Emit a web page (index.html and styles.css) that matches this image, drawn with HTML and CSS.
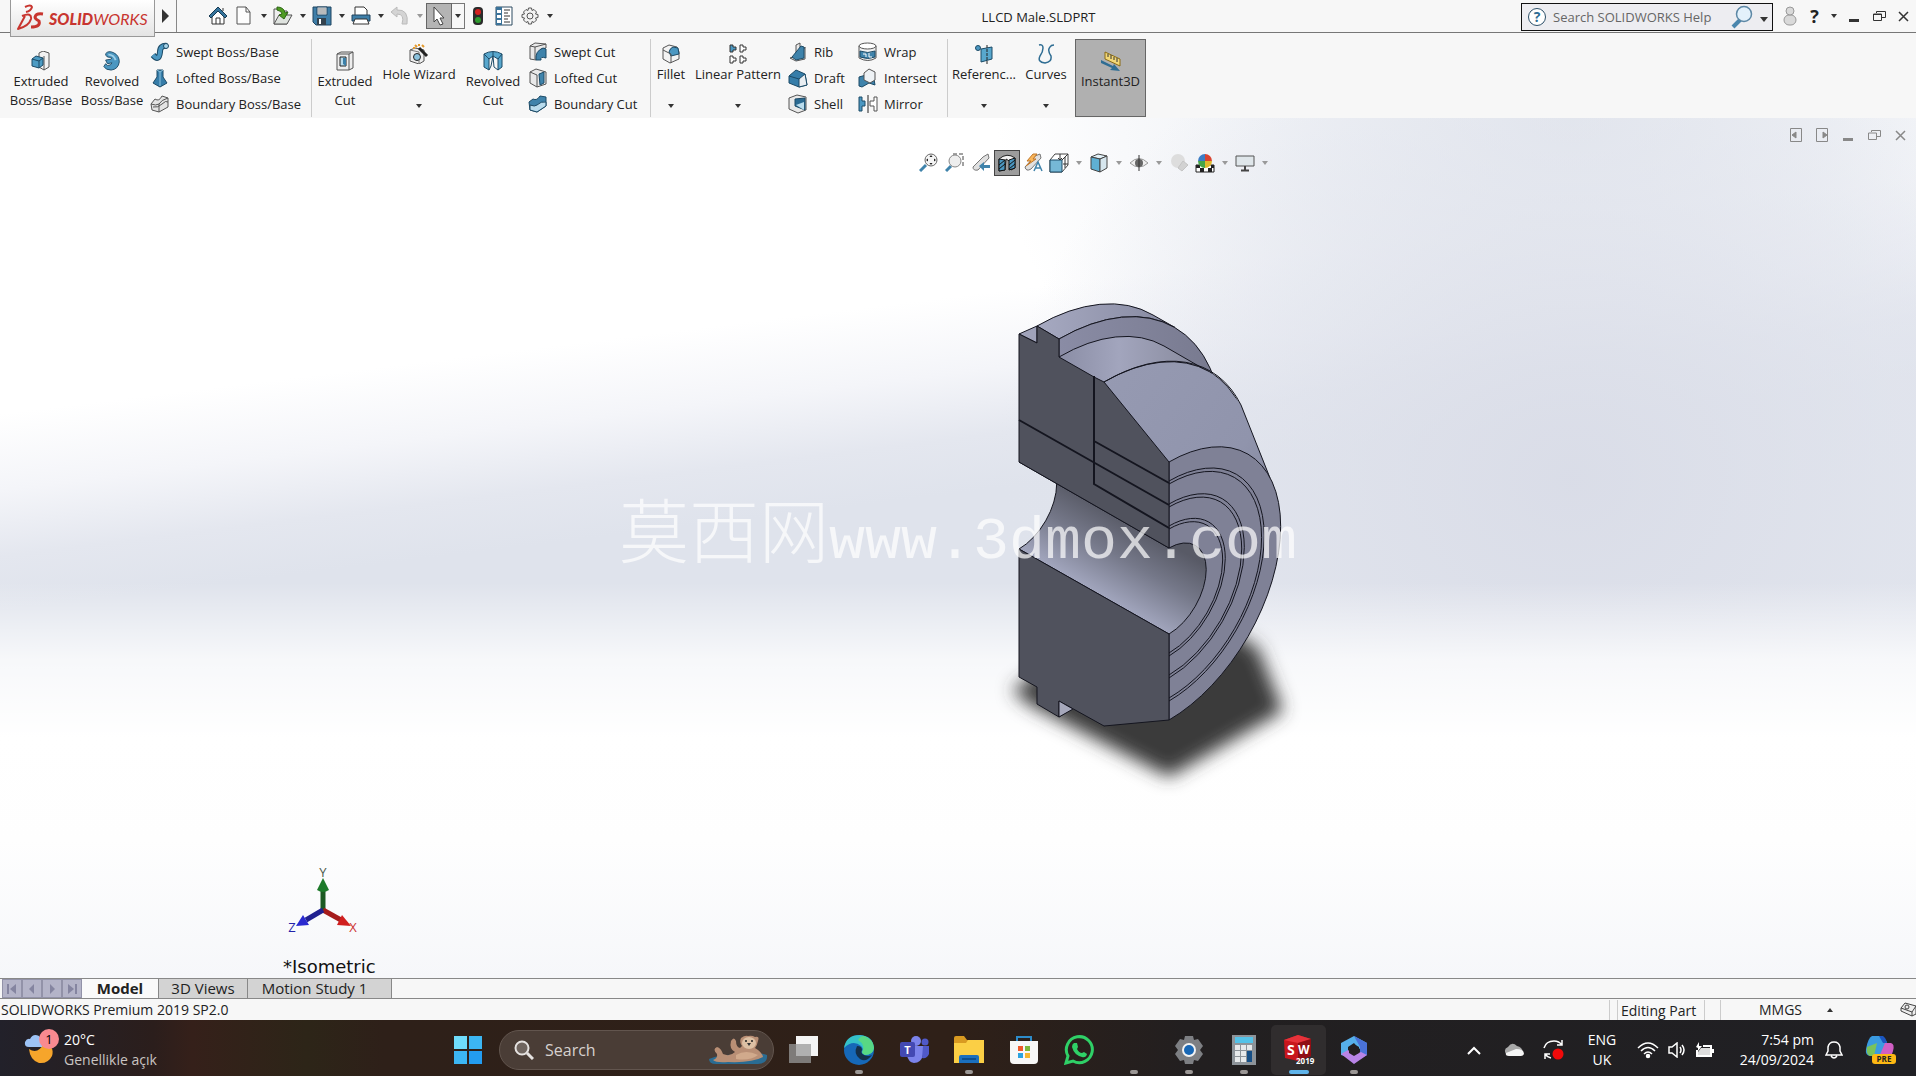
FILE: index.html
```html
<!DOCTYPE html>
<html lang="en">
<head>
    <meta charset="UTF-8">
    <meta name="viewport" content="width=device-width, initial-scale=1.0">
    <title>LLCD Male.SLDPRT</title>
    <link rel="stylesheet" href="styles.css">
</head>
<body>
    <header class="titlebar">
        <div class="logo">
            <svg width="28" height="28" viewBox="0 0 28 28" fill="none" stroke="#c8352f" stroke-width="2" stroke-linejoin="round"><path d="M8 3Q14 0 15 3Q14 7 9 8"/><path d="M5 12Q15 8 14 15Q12 22 1 25L8 12" /><path d="M26 10Q19 9 18 13Q18 15 22 17Q24 23 14 23" stroke-width="3"/></svg>
            <span class="logo-text"><b>SOLID</b>WORKS</span>
        </div>
        <button class="logo-more" aria-label="Menu"><svg width="8" height="14"><path d="M0 0L7 7L0 14Z" fill="#333"/></svg></button>
        <div class="quick">
            <button class="q home" aria-label="Home"><svg width="20" height="20" viewBox="0 0 20 20"><path d="M4 9V18H16V9L10 3Z" fill="#fff" stroke="#333"/><path d="M1 10L10 1L19 10L17 12L10 5L3 12Z" fill="#35749c" stroke="#173a52"/><path d="M8 18V12H12V18M15 2V5" fill="none" stroke="#333"/></svg></button>
            <button class="q" aria-label="New"><svg width="18" height="20" viewBox="0 0 18 20"><path d="M2 1H11L15 6V18H2Z" fill="#fdfdfd" stroke="#555"/><path d="M11 1V6H15" fill="none" stroke="#555"/></svg></button>
            <button class="arrow" aria-label="New options"></button>
            <button class="q" aria-label="Open"><svg width="22" height="20" viewBox="0 0 22 20"><path d="M2 18V3H7L9 5H15V18Z" fill="#eee" stroke="#555"/><path d="M2 18L7 9H20L15 18Z" fill="#dfe3df" stroke="#555"/><path d="M5 1Q12 1 13 7L16 6L12 13L7 9L10 8Q10 5 5 4Z" fill="#4f9c23" stroke="#2c6612"/></svg></button>
            <button class="arrow" aria-label="Open options"></button>
            <button class="q" aria-label="Save"><svg width="20" height="20" viewBox="0 0 20 20"><path d="M1 1H19V19H4L1 16Z" fill="#3e7ea8" stroke="#1f4561"/><path d="M5 1H15V9H5Z" fill="#e8edf0" stroke="#1f4561"/><path d="M6 3H14M6 5H14M6 7H14" stroke="#888"/><path d="M5 12H14V19H5Z" fill="#33424e"/><path d="M7 13H9V18H7Z" fill="#fff"/></svg></button>
            <button class="arrow" aria-label="Save options"></button>
            <button class="q" aria-label="Print"><svg width="20" height="20" viewBox="0 0 20 20"><path d="M4 1H13L16 4V10H4Z" fill="#fff" stroke="#333"/><path d="M1 9H19V15H1Z" fill="#3f7fa8" stroke="#20435c"/><path d="M4 13H16L18 18H2Z" fill="#fff" stroke="#333"/></svg></button>
            <button class="arrow" aria-label="Print options"></button>
            <button class="q" aria-label="Undo"><svg width="20" height="20" viewBox="0 0 20 20"><path d="M1 6L7 1V4Q19 3 17 18L12 18Q15 8 7 8V11Z" fill="#d4d4d4" stroke="#bbb"/></svg></button>
            <button class="arrow pale" aria-label="Undo options"></button>
            <button class="q select" aria-label="Select"><svg width="14" height="20" viewBox="0 0 14 20"><path d="M2 1V16L5 13L8 19L11 18L8 12H12Z" fill="#fff" stroke="#444"/></svg></button>
            <button class="arrow select-arrow" aria-label="Select options"></button>
            <button class="q" aria-label="Rebuild"><svg width="12" height="20" viewBox="0 0 12 20"><rect x="1" y="1" width="10" height="18" rx="4" fill="#2b2b2b"/><circle cx="6" cy="6" r="3" fill="#d42020"/><circle cx="6" cy="14" r="3" fill="#2f9b2f"/></svg></button>
            <button class="q" aria-label="File properties"><svg width="18" height="20" viewBox="0 0 18 20"><path d="M1 1H17V19H1Z" fill="#fff" stroke="#2c4b60"/><path d="M1 1H7V19H1Z" fill="#3a7299"/><path d="M2 4H6V7H2ZM2 9H6V12H2ZM2 14H6V17H2Z" fill="#fff"/><path d="M9 4H15M9 7H13M9 10H15M9 13H13M9 16H15" stroke="#333"/></svg></button>
            <button class="q" aria-label="Options"><svg width="18" height="18" viewBox="0 0 18 18" fill="none" stroke="#555"><path d="M7.500 1H10.500L11 3.500L13 2.500L15.500 5L14.500 7L17 7.500V10.500L14.500 11L15.500 13L13 15.500L11 14.500L10.500 17H7.500L7 14.500L5 15.500L2.500 13L3.500 11L1 10.500V7.500L3.500 7L2.500 5L5 2.500L7 3.500Z" fill="#f2f2f2"/><circle cx="9" cy="9" r="3"/></svg></button>
            <button class="arrow" aria-label="More options"></button>
        </div>
        <div class="doc-title">LLCD Male.SLDPRT</div>
        <label class="help-search">
            <svg width="20" height="20" viewBox="0 0 20 20"><circle cx="10" cy="10" r="8.500" fill="#fff" stroke="#2b4f68"/><text x="10" y="15" text-anchor="middle" class="qmark">?</text></svg>
            <input type="text" placeholder="Search SOLIDWORKS Help" aria-label="Search SOLIDWORKS Help">
            <svg width="24" height="24" viewBox="0 0 24 24"><path d="M11 14L3 22" stroke="#4a86ad" stroke-width="4"/><circle cx="14" cy="9" r="7.500" fill="#e3f1fb" stroke="#5c87a5" stroke-width="1.500"/></svg>
            <i class="caret big"></i>
        </label>
        <div class="win">
            <button aria-label="User"><svg width="14" height="20" viewBox="0 0 14 20" fill="#d9d9d9" stroke="#999"><rect x="1" y="9" width="12" height="10" rx="5"/><circle cx="7" cy="5" r="4"/></svg></button>
            <button class="help">?</button>
            <button class="arrow" aria-label="Help options"></button>
            <button aria-label="Minimize"><svg width="12" height="14"><path d="M1 11.500H11" stroke="#333" stroke-width="3"/></svg></button>
            <button aria-label="Restore"><svg width="14" height="12" fill="none" stroke="#333"><path d="M4.500 3V1.500H13.500V7.500H10"/><path d="M1.500 4H9.500V10.500H1.500ZM1 4.500H10"/></svg></button>
            <button aria-label="Close"><svg width="11" height="11"><path d="M1 1L10 10M10 1L1 10" stroke="#333" stroke-width="1.500"/></svg></button>
        </div>
    </header>

    <nav class="ribbon">
        <div class="group g1">
            <button class="big mid w70"><svg width="20" height="20" viewBox="0 0 20 20"><path d="M8 2L12 0L18 2V16L13 19L8 16Z" fill="#f2f2f2" stroke="#555"/><path d="M13 5V19" stroke="#555"/><path d="M1 8L5 5L12 7V14L8 17L1 15Z" fill="#4d9cc4" stroke="#1c4a66"/><path d="M1 8L8 10V17M8 10L12 7" fill="none" stroke="#1c4a66"/></svg>Extruded<br>Boss/Base</button>
            <button class="big mid w72"><svg width="20" height="22" viewBox="0 0 20 22"><path d="M3 3Q6 -1 12 2Q18 5 18 12Q17 20 9 21Q3 21 1 17L3 14L5 16Q9 16 10 13L5 14L3 10L9 9Q11 7 8 7Q3 7 3 3Z" fill="#4b97c1" stroke="#1c4a66"/><path d="M6 4Q12 4 14 10" fill="none" stroke="#9fd0e8" stroke-width="2"/></svg>Revolved<br>Boss/Base</button>
            <div class="stack">
                <button class="small"><svg width="20" height="20" viewBox="0 0 20 20"><path d="M3 13Q9 20 10 10Q10 3 17 4" fill="none" stroke="#1c4a66" stroke-width="6"/><path d="M3 13Q9 20 10 10Q10 3 17 4" fill="none" stroke="#4b97c1" stroke-width="4"/><circle cx="16" cy="4" r="2.500" fill="#a9d5ea" stroke="#1c4a66"/></svg>Swept Boss/Base</button>
                <button class="small"><svg width="20" height="20" viewBox="0 0 20 20"><path d="M7 2H13L13 9L17 15L10 19L3 15L7 9Z" fill="#367da9" stroke="#1c4a66"/><path d="M7 2L10 4L13 2M10 4V18" stroke="#8ec3dd" fill="none"/></svg>Lofted Boss/Base</button>
                <button class="small"><svg width="20" height="20" viewBox="0 0 20 20"><path d="M1 10L5 5Q9 8 12 2L18 4V13L9 18L2 16Z" fill="#e4e4e4" stroke="#555"/><path d="M1 10Q6 12 9 10Q11 6 18 4M9 10V18M3 13Q8 14 12 10T18 8" fill="none" stroke="#555"/></svg>Boundary Boss/Base</button>
            </div>
        </div>
        <div class="group g2">
            <button class="big mid w66"><svg width="18" height="20" viewBox="0 0 18 20"><path d="M1 3L5 1H17V17L13 19H1Z" fill="#eee" stroke="#555"/><path d="M1 3H13V19M13 3L17 1" fill="none" stroke="#555"/><path d="M4 6H10V15H4Z" fill="#b9dced" stroke="#222"/><path d="M7 7H10V15L7 13Z" fill="#3b7fa8"/></svg>Extruded<br>Cut</button>
            <button class="big w82"><svg width="20" height="20" viewBox="0 0 20 20"><path d="M1 6L6 4L15 6V17L10 20L1 17Z" fill="#eee" stroke="#555"/><path d="M1 6L10 8V20" fill="none" stroke="#777"/><circle cx="8" cy="13" r="3.500" fill="#8cc3de" stroke="#222"/><path d="M10 4L18 12" stroke="#222" stroke-width="3"/><path d="M6 1L8 3M10 0V2M4 4H6M13 1L15 3" stroke="#e49a2d" stroke-width="2"/></svg>Hole Wizard<i class="caret"></i></button>
            <button class="big mid w66"><svg width="20" height="20" viewBox="0 0 20 20"><path d="M1 3Q10 -2 19 3V16L15 19V8L10 5L6 8V19L1 16Z" fill="#58a7cd" stroke="#1c4a66"/><path d="M1 3Q5 7 6 8M19 3L15 8M10 1V5L11 16L15 19M10 5L8 15L6 19" fill="none" stroke="#1c4a66"/></svg>Revolved<br>Cut</button>
            <div class="stack">
                <button class="small"><svg width="20" height="20" viewBox="0 0 20 20"><path d="M2 4L7 1L18 2V6L13 7Q9 11 8 18L2 17Z" fill="#e9e9e9" stroke="#555"/><path d="M2 4L7 5V17M7 5L18 2" fill="none" stroke="#555"/><path d="M8 18Q7 9 15 6L18 7V16Q12 14 13 18Z" fill="#3f83ab" stroke="#1c4a66"/></svg>Swept Cut</button>
                <button class="small"><svg width="20" height="20" viewBox="0 0 20 20"><path d="M2 4L8 1L18 4V16L9 19L2 15Z" fill="#e9e9e9" stroke="#555"/><path d="M2 4L9 7V19" fill="none" stroke="#555"/><path d="M11 6L16 4V15L12 17Z" fill="#3f83ab" stroke="#1c4a66"/></svg>Lofted Cut</button>
                <button class="small"><svg width="20" height="20" viewBox="0 0 20 20"><path d="M1 8L5 5Q9 7 12 2L18 3V12L9 18L2 16Z" fill="#3f83ab" stroke="#1c4a66"/><path d="M2 11Q7 13 9 11Q13 7 18 8V12L9 18L2 16Z" fill="#b9dced" stroke="#1c4a66"/></svg>Boundary Cut</button>
            </div>
        </div>
        <div class="group g3">
            <button class="big w40"><svg width="20" height="20" viewBox="0 0 20 20"><path d="M2 4L8 1L16 3L18 8V15L9 19L2 15Z" fill="#f3f3f3" stroke="#555"/><path d="M8 8Q9 4 12 3L17 4L18 10L10 12Z" fill="#4b97c1" stroke="#1c4a66"/><path d="M2 6L10 10V19" fill="none" stroke="#555"/></svg>Fillet<i class="caret"></i></button>
            <button class="big w94"><svg width="18" height="20" viewBox="0 0 18 20" fill="#fff" stroke="#333"><path d="M1 1H4V3H7V6H4V8H1Z" fill="#4b97c1"/><path d="M11 1H14V3H17V6H14V8H11ZM1 12H4V14H7V17H4V19H1ZM11 12H14V14H17V17H14V19H11Z"/></svg>Linear Pattern<i class="caret"></i></button>
            <div class="stack w70">
                <button class="small"><svg width="20" height="20" viewBox="0 0 20 20"><path d="M2 16L8 14V3L12 1V14L17 5V17L8 19Z" fill="#e9e9e9" stroke="#555"/><path d="M4 15L13 4L16 5V16L8 18Z" fill="#3f83ab" stroke="#1c4a66"/></svg>Rib</button>
                <button class="small"><svg width="20" height="20" viewBox="0 0 20 20"><path d="M1 8L8 2L17 6L19 17L11 19L1 15Z" fill="#367da9" stroke="#1c4a66"/><path d="M11 11L17 6L19 17L11 19Z" fill="#e9eef2" stroke="#1c4a66"/><path d="M1 8L11 11" stroke="#1c4a66"/></svg>Draft</button>
                <button class="small"><svg width="20" height="20" viewBox="0 0 20 20"><path d="M1 4L9 1L18 3V16L10 19L1 15Z" fill="#e9e9e9" stroke="#555"/><path d="M7 5L17 4V16L7 12Z" fill="#2a6a92" stroke="#1c4a66"/><path d="M8 11L16 16V8Z" fill="#b9dced"/></svg>Shell</button>
            </div>
            <div class="stack">
                <button class="small"><svg width="20" height="20" viewBox="0 0 20 20"><path d="M1 4V16Q10 21 18 16V4" fill="#f1f1f1" stroke="#555"/><ellipse cx="9.500" cy="4" rx="8.500" ry="3" fill="#fff" stroke="#555"/><path d="M2 9Q10 12 17 9V15Q10 18 2 15Z" fill="#3f83ab" stroke="#1c4a66"/><path d="M5 12H8V15M11 11V15H14" stroke="#fff" fill="none"/></svg>Wrap</button>
                <button class="small"><svg width="20" height="20" viewBox="0 0 20 20"><path d="M1 9L8 7L16 11L17 17L11 15L4 19L1 18Z" fill="#3f83ab" stroke="#1c4a66"/><path d="M6 5L11 1L17 4V12L12 15L6 12Z" fill="#eef2f5" stroke="#555"/></svg>Intersect</button>
                <button class="small"><svg width="20" height="20" viewBox="0 0 20 20"><path d="M1 3H4V7H7V12H4V17H1Z" fill="#4b97c1" stroke="#1c4a66"/><path d="M10 1V19" stroke="#222"/><path d="M19 3H16V7H12V12H16V17H19Z" fill="#fff" stroke="#555"/></svg>Mirror</button>
            </div>
        </div>
        <div class="group g4">
            <button class="big w72"><svg width="20" height="20" viewBox="0 0 20 20"><circle cx="4" cy="4" r="2.500" fill="#4b97c1" stroke="#1c4a66"/><path d="M7 5L18 3V15L7 18Z" fill="#58a7cd" stroke="#1c4a66"/><path d="M13 1V20" stroke="#222" stroke-dasharray="3 1"/></svg>Referenc...<i class="caret"></i></button>
            <button class="big w52"><svg width="18" height="20" viewBox="0 0 18 20"><path d="M2 1Q6 0 6 4Q6 8 3 12Q0 18 8 19Q15 18 14 12Q10 6 13 3Q14 1 17 1" fill="none" stroke="#2f6d93" stroke-width="1.500"/></svg>Curves<i class="caret"></i></button>
        </div>
        <button class="instant"><svg width="22" height="20" viewBox="0 0 22 20"><path d="M5 1L20 8V15L5 8Z" fill="#f3d877" stroke="#8a6b14"/><path d="M8 3V6M11 4V8M14 6V9M17 7V11" stroke="#333"/><path d="M1 9L13 15L14 13L20 20L10 19L12 17L1 12Z" fill="#2f6d93"/></svg>Instant3D</button>
    </nav>

    <main class="viewport">
        <div class="headsup">
            <button aria-label="Zoom to fit"><svg width="20" height="20" viewBox="0 0 20 20"><path d="M7 12L1 18" stroke="#3f83ab" stroke-width="3"/><circle cx="12" cy="7" r="6" fill="#f5f5f5" stroke="#666"/><path d="M12 2L13.500 4H10.500ZM12 12L13.500 10H10.500ZM7 7L9 5.500V8.500ZM17 7L15 5.500V8.500Z" fill="#222"/></svg></button>
            <button aria-label="Zoom to area"><svg width="20" height="20" viewBox="0 0 20 20"><path d="M8 1H18V13" fill="none" stroke="#444" stroke-dasharray="4 2"/><path d="M6 13L1 18" stroke="#3f83ab" stroke-width="3"/><circle cx="10" cy="8" r="6" fill="#eee" stroke="#888"/></svg></button>
            <button aria-label="Previous view"><svg width="20" height="20" viewBox="0 0 20 20"><path d="M2 14L12 4L17 1L18 5L7 17Q2 18 2 14Z" fill="#e0e0e0" stroke="#777"/><path d="M8 13L13 9V12H19V15H13V18Z" fill="#3f83ab"/></svg></button>
            <button class="on" aria-label="Section view"><svg width="20" height="20" viewBox="0 0 20 20"><path d="M2 6Q10 -1 18 5V15L14 17V9L9 6L8 17L2 18Z" fill="#f2f2f2" stroke="#222"/><path d="M2 6L8 7V17L2 18ZM12 7L18 5V15L12 17Z" fill="#4b97c1" stroke="#111"/><path d="M2 12L8 7M2 16L8 11M12 12L18 7M12 16L18 11" stroke="#111"/></svg></button>
            <button aria-label="Dynamic annotation views"><svg width="20" height="20" viewBox="0 0 20 20"><path d="M2 14L12 3L17 1L18 5L8 16Q3 19 2 14Z" fill="#e0e0e0" stroke="#777"/><path d="M10 1L4 8H8L3 13L13 6H10L14 1Z" fill="#f9b65a" stroke="#c0772a"/><path d="M11 18L15 9L19 18M12 15H18" fill="none" stroke="#3f83ab" stroke-width="1.500"/></svg></button>
            <button aria-label="View orientation"><svg width="20" height="20" viewBox="0 0 20 20"><path d="M1 7L6 1H19V12L13 19H1Z" fill="#fff" stroke="#444"/><path d="M1 7H13V19H1Z" fill="#76b8d6" stroke="#1c4a66"/><path d="M13 7L19 1M11 1V7M9 5L11 7L13 5M16 4V15M14 11H19" fill="none" stroke="#333"/></svg></button>
            <button class="arrow pale" aria-label="Orientation options"></button>
            <button aria-label="Display style"><svg width="20" height="20" viewBox="0 0 20 20"><path d="M2 4L9 1L18 3L11 6Z" fill="#e3f2f9" stroke="#444"/><path d="M2 4L11 6V19L2 16Z" fill="#5fb0d3" stroke="#444"/><path d="M11 6L18 3V15L11 19Z" fill="#d6e6ee" stroke="#444"/></svg></button>
            <button class="arrow pale" aria-label="Display options"></button>
            <button aria-label="Hide or show items"><svg width="20" height="20" viewBox="0 0 20 20"><path d="M1 10Q10 1 19 10Q10 18 1 10Z" fill="#eee" stroke="#999"/><circle cx="10" cy="10" r="4" fill="#666"/><path d="M10 2V18" stroke="#333"/></svg></button>
            <button class="arrow pale" aria-label="Hide options"></button>
            <button aria-label="Edit appearance"><svg width="20" height="20" viewBox="0 0 20 20"><circle cx="9" cy="8" r="7" fill="#ddd"/><path d="M9 15L14 8L19 12L13 18Z" fill="#d2d2d2" stroke="#c4c4c4"/></svg></button>
            <button aria-label="Apply scene"><svg width="20" height="20" viewBox="0 0 20 20"><path d="M1 12H19V19H1Z" fill="#fff" stroke="#222"/><path d="M1 12H5V15H1ZM5 15H9V19H5ZM13 15H17V19H13ZM16 12H19V15H16Z" fill="#222"/><path d="M10 8V1A7 7 0 0 1 17 8Z" fill="#d8432f"/><path d="M10 8H17A7 7 0 0 1 10 15Z" fill="#e0b72d"/><path d="M10 8V15A7 7 0 0 1 3 8Z" fill="#46a548"/><path d="M10 8H3A7 7 0 0 1 10 1Z" fill="#3b7cc4"/></svg></button>
            <button class="arrow pale" aria-label="Scene options"></button>
            <button aria-label="View settings"><svg width="20" height="20" viewBox="0 0 20 20"><path d="M1 3H19V13H1Z" fill="#dfe6ea" stroke="#555"/><path d="M10 13V17M6 17.500H14" stroke="#444" stroke-width="2"/></svg></button>
            <button class="arrow pale" aria-label="View options"></button>
        </div>

        <div class="doc-controls">
            <button aria-label="Collapse left"><svg width="14" height="16" fill="none" stroke="#888"><path d="M1.500 1.500H12.500V14.500H1.500Z"/><path d="M7 5L3 8L7 11Z" fill="#888"/></svg></button>
            <button aria-label="Collapse right"><svg width="14" height="16" fill="none" stroke="#888"><path d="M1.500 1.500H12.500V14.500H1.500Z"/><path d="M8 5L12 8L8 11Z" fill="#888"/></svg></button>
            <button aria-label="Minimize document"><svg width="12" height="14"><path d="M1 11.500H11" stroke="#888" stroke-width="3"/></svg></button>
            <button aria-label="Restore document"><svg width="14" height="12" fill="none" stroke="#888"><path d="M4.500 3V1.500H13.500V7.500H10"/><path d="M1.500 4H9.500V10.500H1.500Z"/></svg></button>
            <button aria-label="Close document"><svg width="11" height="11"><path d="M1 1L10 10M10 1L1 10" stroke="#888" stroke-width="1.500"/></svg></button>
        </div>

        <svg class="part" width="352" height="520" viewBox="958 280 352 520">
            <defs>
                <filter id="soft" x="-20%" y="-20%" width="140%" height="140%"><feGaussianBlur stdDeviation="9"/></filter>
                <linearGradient id="rim" x1="0" y1="0" x2="1" y2="0"><stop offset="0" stop-color="#a6a9c1"/><stop offset="1" stop-color="#8689a0"/></linearGradient>
                <linearGradient id="face" x1="0" y1="0" x2="1" y2="0"><stop offset="0" stop-color="#8a8ca5"/><stop offset="1" stop-color="#77798e"/></linearGradient>
                <linearGradient id="neck" x1="0" y1="0" x2="1" y2="0"><stop offset="0" stop-color="#8a8da5"/><stop offset=".4" stop-color="#a2a5bd"/><stop offset="1" stop-color="#858799"/></linearGradient>
                <linearGradient id="cone" x1="0" y1="0" x2="1" y2="1"><stop offset="0" stop-color="#969ab2"/><stop offset=".6" stop-color="#9094ac"/><stop offset="1" stop-color="#7b7e93"/></linearGradient>
                <linearGradient id="bore" gradientUnits="userSpaceOnUse" x1="1120" y1="505" x2="1075" y2="583"><stop offset=".1" stop-color="#585a66"/><stop offset=".5" stop-color="#757889"/><stop offset="1" stop-color="#a4a8c0"/></linearGradient>
            </defs>
            <path class="shadow" d="M1012 690L1030 705L1169 777L1283 711L1258 648L1160 590Z" filter="url(#soft)"/>
            <g class="edge">
                <!-- flange -->
                <path fill="#a0a3ba" d="M1019 334L1037 326V343Z"/>
                <path fill="url(#rim)" d="M1037 326A231.500 133.600 -60 0 1 1153 315L1175 327.500A231.500 133.600 -60 0 0 1059 339Z"/>
                <path fill="url(#face)" d="M1059 339A1 .577 -60 0 1 1059 717Z"/>
                <!-- neck and cone -->
                <path fill="url(#neck)" d="M1059 357A210 121 -60 0 1 1164 346L1209 372L1180 470L1104 440Z"/>
                <path fill="url(#cone)" d="M1104 382A1 .577 -60 0 1 1104 726Z"/>
                <path fill="url(#cone)" stroke="none" d="M1104 382L1168 365L1213 374L1240 403L1269 475L1169 591Z"/>
                <path fill="none" d="M1104 382A210.700 121.600 -60 0 1 1241 405L1270 478"/>
                <!-- front rings -->
                <path fill="#7f8196" d="M1169 462A1 .577 -60 0 1 1169 720Z"/>
                <g fill="none">
                    <path d="M1169 481A1 .577 -60 0 1 1169 701M1169 484A1 .577 -60 0 1 1169 698"/>
                    <path d="M1169 504A1 .577 -60 0 1 1169 678M1169 507A1 .577 -60 0 1 1169 675"/>
                    <path d="M1169 526A1 .577 -60 0 1 1169 656M1169 529A1 .577 -60 0 1 1169 653"/>
                </g>
                <path fill="url(#bore)" d="M1019 549A1 .577 -60 0 0 1019 462L1169 548A1 .577 -60 0 1 1169 634Z"/>
                <!-- cut faces -->
                <path fill="#50525d" d="M1019 334L1037 343V326L1059 339V357L1094 377L1104 382L1169 462V548L1019 462Z"/>
                <path fill="#50525d" d="M1019 549L1169 634V720L1104 726L1059 701V717L1037 704V687L1019 677Z"/>
                <path fill="#a6a8bb" d="M1059 701L1073 709L1059 717Z"/>
            </g>
            <g class="seam"><path d="M1019 420L1169 505M1094 441L1169 483M1094 376V484L1169 528"/></g>
        </svg>

        <div class="watermark"><span>莫西网</span>www.3dmox.com</div>

        <div class="triad">
            <svg width="76" height="76" viewBox="286 864 76 76">
                <path d="M323 910V890" stroke="#1c5a22" stroke-width="5"/><path d="M317 890L323 878L329 890Q323 894 317 890Z" fill="#1d7a2a"/>
                <path d="M323 910L341 920" stroke="#a51c1c" stroke-width="5"/><path d="M342 915L351 926L337 925Z" fill="#d01f1f"/>
                <path d="M323 910L306 920" stroke="#20208f" stroke-width="5"/><path d="M303 915L296 926L309 925Z" fill="#2a2ad0"/>
                <text x="323" y="877" fill="#4a5a4a">Y</text><text x="353" y="932" fill="#c33">X</text><text x="292" y="932" fill="#22a">Z</text>
            </svg>
            <div class="view-name">*Isometric</div>
        </div>
    </main>

    <div class="tabs">
        <button class="step" aria-label="First"><svg width="12" height="12"><path d="M2 1V11" stroke="#8585a0" stroke-width="2"/><path d="M10 1L4 6L10 11Z" fill="#8585a0"/></svg></button>
        <button class="step" aria-label="Previous"><svg width="12" height="12"><path d="M8 1L3 6L8 11Z" fill="#8585a0"/></svg></button>
        <button class="step" aria-label="Next"><svg width="12" height="12"><path d="M4 1L9 6L4 11Z" fill="#8585a0"/></svg></button>
        <button class="step" aria-label="Last"><svg width="12" height="12"><path d="M10 1V11" stroke="#8585a0" stroke-width="2"/><path d="M2 1L8 6L2 11Z" fill="#8585a0"/></svg></button>
        <button class="tab active">Model</button>
        <button class="tab">3D Views</button>
        <button class="tab wide">Motion Study 1</button>
    </div>

    <div class="status">
        <span class="product">SOLIDWORKS Premium 2019 SP2.0</span>
        <span class="cell narrow"></span>
        <span class="cell editing">Editing Part</span>
        <span class="cell gap"></span>
        <button class="cell units">MMGS<i class="caret up"></i></button>
        <svg width="16" height="16" viewBox="0 0 16 16" fill="#eee" stroke="#444"><path d="M1 6L5 1L16 4V12L12 14L1 9Z"/><path d="M1 6L12 10V14M12 10L16 4" fill="none"/><circle cx="7" cy="5" r="2"/></svg>
    </div>

    <footer class="taskbar">
        <button class="weather">
            <svg width="36" height="36" viewBox="0 0 36 36"><path d="M5 20Q14 26 20 14Q31 17 28 27Q24 35 15 34Q6 31 5 20Z" fill="#f6a52b"/><path d="M5 18Q0 18 1 13Q3 9 6 10Q9 4 15 7Q20 12 18 18Z" fill="#9dc3f5"/><circle cx="25" cy="10" r="10" fill="#f98a90"/><text x="25" y="15" text-anchor="middle">1</text></svg>
            <span class="weather-text"><b>20°C</b>Genellikle açık</span>
        </button>
        <button class="app start" aria-label="Start"><svg width="30" height="30" viewBox="0 0 30 30" fill="#3cb6f3"><path d="M1 1H14V14H1Z" fill="#6fdcfb"/><path d="M16 1H29V14H16Z"/><path d="M1 16H14V29H1Z"/><path d="M16 16H29V29H16Z" fill="#239cf0"/></svg></button>
        <label class="search">
            <svg width="20" height="20" viewBox="0 0 20 20" fill="none" stroke="#e6e3e1" stroke-width="2"><circle cx="8" cy="8" r="6.500" fill="#6f655f"/><path d="M13 13L19 19" stroke-width="3"/></svg>
            <input type="text" placeholder="Search" aria-label="Search">
            <svg width="60" height="30" viewBox="0 0 60 30"><path d="M1 24Q14 19 30 20Q48 16 59 20Q60 28 50 29H8Q1 29 1 24Z" fill="#2a6c93"/><path d="M5 25Q10 23 9 19Q4 14 9 12Q13 13 15 19Q22 22 27 17Q21 14 23 6Q26 1 28 6Q28 12 32 13L34 11Q31 7 33 3Q37 0 40 1Q44 0 47 2Q52 1 50 6Q49 11 47 13Q54 17 55 22Q44 28 20 27Q8 28 5 25Z" fill="#b98f75"/><path d="M28 20Q38 14 50 20Q42 26 28 24Z" fill="#d1aa8c"/><ellipse cx="41" cy="8" rx="7" ry="6" fill="#dcc0a4"/><circle cx="38" cy="6" r="1" fill="#222"/><circle cx="44" cy="6" r="1" fill="#222"/><path d="M39 8H43L41 11Z" fill="#333"/></svg>
        </label>
        <div class="apps">
            <button class="app" aria-label="Task view"><svg width="30" height="30" viewBox="0 0 30 30"><path d="M7 1H29V21H7Z" fill="#f4f4f4"/><path d="M0 9H22V28H0Z" fill="#999" opacity=".75"/></svg></button>
            <button class="app run" aria-label="Edge"><svg width="30" height="30" viewBox="0 0 30 30"><circle cx="15" cy="15" r="15" fill="#1668b8"/><path d="M0 13Q2 0 16 0Q29 1 30 13Q29 20 21 20Q18 19 18 17Q20 14 17 11Q9 4 0 13Z" fill="#35c1c9"/><path d="M20 1Q29 4 30 13Q29 20 21 20Q18 19 18 17Q22 10 14 5Q16 1 20 1Z" fill="#58d884"/><path d="M13 11Q18 11 18 15Q16 18 20 20Q24 22 28 20Q22 28 16 24Q9 19 13 11Z" fill="#14304a"/></svg></button>
            <button class="app" aria-label="Teams"><svg width="30" height="30" viewBox="0 0 30 30"><circle cx="17" cy="6" r="5" fill="#7b83eb"/><circle cx="26" cy="7" r="3.500" fill="#5059c9"/><path d="M8 11H24V20Q22 28 15 28Q9 27 8 20Z" fill="#7b83eb"/><path d="M24 11H30V19Q28 24 23 23Z" fill="#5059c9"/><rect x="1" y="7" width="15" height="15" rx="2" fill="#4349b3"/><text x="8.500" y="19" text-anchor="middle" class="icon-t">T</text></svg></button>
            <button class="app run" aria-label="File explorer"><svg width="30" height="30" viewBox="0 0 30 30"><path d="M0 3Q0 1 2 1H10L13 5H28Q30 5 30 7V12H0Z" fill="#d99a21"/><path d="M0 8H12L14 5H30V28H0Z" fill="#fbcf45"/><path d="M5 28V22Q5 20 7 20H23Q25 20 25 22V28Z" fill="#1b6fbd"/><path d="M8 24H22" stroke="#0c4f8f" stroke-width="2"/></svg></button>
            <button class="app" aria-label="Store"><svg width="30" height="30" viewBox="0 0 30 30"><path d="M8 8V2H22V8" fill="none" stroke="#2d8bc9" stroke-width="2"/><path d="M1 6H29V25Q29 29 25 29H5Q1 29 1 25Z" fill="#f7f7f7"/><path d="M9 11H14V16H9Z" fill="#f0592b"/><path d="M16 11H21V16H16Z" fill="#7db83c"/><path d="M9 18H14V23H9Z" fill="#2ba3e0"/><path d="M16 18H21V23H16Z" fill="#f5b62f"/></svg></button>
            <button class="app" aria-label="WhatsApp"><svg width="30" height="30" viewBox="0 0 30 30"><path d="M2 28L4 21A13 13 0 1 1 9 26Z" fill="none" stroke="#2fd067" stroke-width="3"/><path d="M10 8L13 8L14 12L13 14Q15 18 18 18L20 17L23 19Q22 23 18 22Q10 20 8 12Q8 9 10 8Z" fill="#2fd067"/></svg></button>
            <button class="app run" aria-label="Window"></button>
            <button class="app run" aria-label="Settings"><svg width="30" height="30" viewBox="0 0 30 30"><path d="M11 1H19L20 5L24 4L29 11L26 15L29 19L24 26L20 25L19 29H11L10 25L6 26L1 19L4 15L1 11L6 4L10 5Z" fill="#7d7f83"/><circle cx="15" cy="15" r="7" fill="#f2f2f2"/><circle cx="15" cy="15" r="5" fill="#1867b5"/></svg></button>
            <button class="app run" aria-label="Calculator"><svg width="24" height="30" viewBox="0 0 24 30"><path d="M0 0H24V30H0Z" fill="#8d9399"/><path d="M3 2H21V8H3Z" fill="#54c2e8"/><path d="M3 10H8V15H3ZM9 10H14V15H9ZM15 10H20V15H15ZM3 16H8V21H3ZM9 16H14V21H9ZM3 22H8V27H3ZM9 22H14V27H9Z" fill="#e7e9eb"/><path d="M15 16H20V27H15Z" fill="#174f86"/></svg></button>
            <button class="app run current" aria-label="SOLIDWORKS 2019"><svg width="32" height="30" viewBox="0 0 32 30"><path d="M1 5L15 0L28 4V21L15 26L2 23Z" fill="#c8161d"/><path d="M1 5L15 0L28 4L15 8Z" fill="#e6323a"/><path d="M15 8V26L28 21V4Z" fill="#8f0e14"/><text x="4" y="20" class="icon-s">S</text><text x="15" y="19" class="icon-w">W</text><text x="13" y="29" class="icon-y">2019</text></svg></button>
            <button class="app run" aria-label="Microsoft 365"><svg width="28" height="30" viewBox="0 0 28 30"><path d="M14 1L27 8V17L18 13L14 8L8 12V22L1 20V8Z" fill="#56b0ea"/><path d="M14 1L27 8V20L20 24V12Z" fill="#4a72d8"/><path d="M1 19L8 15L14 20L21 17L27 20L14 29Z" fill="#b884e6"/><path d="M14 9L19 12V18L14 21L9 18V12Z" fill="#221f20"/></svg></button>
        </div>
        <div class="tray">
            <button class="t-chev" aria-label="Hidden icons"><svg width="14" height="9" fill="none" stroke="#fff" stroke-width="2"><path d="M1 8L7 2L13 8"/></svg></button>
            <button class="t-40" aria-label="OneDrive"><svg width="20" height="14" viewBox="0 0 20 14"><path d="M2 11Q-1 6 4 4Q8 -2 13 3Q18 4 19 9Z" fill="#a9a9a9"/><path d="M5 13Q1 13 2 10L12 6Q20 6 20 11Q19 13 17 13Z" fill="#f5f5f5"/></svg></button>
            <button class="t-40" aria-label="Updates"><svg width="22" height="22" viewBox="0 0 22 22" fill="none" stroke="#fff"><path d="M1 9Q3 2 11 2Q16 2 19 6M19 1V6H14M8 19Q4 18 2 15M2 20V15H7" stroke-width="1.500"/><circle cx="15" cy="15" r="5.500" fill="#f00a0a" stroke="none"/></svg></button>
            <button class="lang">ENG<br>UK</button>
            <button class="net" aria-label="Network, sound, battery">
                <svg width="22" height="18" viewBox="0 0 22 18" fill="none" stroke="#fff" stroke-width="1.500"><path d="M1 7Q11 -3 21 7M4 10Q11 3 18 10M7 13Q11 9 15 13"/><circle cx="11" cy="15" r="1.500" fill="#fff"/></svg>
                <svg width="18" height="16" viewBox="0 0 18 16" fill="none" stroke="#fff" stroke-width="1.500"><path d="M1 5H4L9 1V15L4 11H1Z"/><path d="M12 5Q14 8 12 11M14 3Q18 8 14 13"/></svg>
                <svg width="20" height="16" viewBox="0 0 20 16"><path d="M2 8V14H16V4H8" fill="none" stroke="#fff" stroke-width="2"/><path d="M6 6H15V13H3V10Z" fill="#ddd"/><path d="M17 7H19V11H17Z" fill="#fff"/><path d="M1 5L4 0V4H7L3 9V6Z" fill="#fff"/></svg>
            </button>
            <button class="clock">7:54 pm<br>24/09/2024</button>
            <button class="bell" aria-label="Notifications"><svg width="18" height="20" viewBox="0 0 18 20" fill="none" stroke="#fff" stroke-width="1.500"><path d="M1 15L3 11V7Q4 2 9 2Q14 2 15 7V11L17 15ZM6 16Q9 20 12 16"/></svg></button>
            <button class="copilot" aria-label="Copilot"><svg width="32" height="30" viewBox="0 0 32 30"><path d="M7 1H17L22 7L16 21H5Q0 20 1 14Q3 3 7 1Z" fill="#3a9be0"/><path d="M2 12L12 8L9 21H5Q1 20 2 12Z" fill="#7ac35c"/><path d="M20 8H26Q30 9 28 16L26 22H14Z" fill="#d05fc4"/><path d="M14 1H18Q21 3 22 8H18Z" fill="#1b56c0"/><rect x="7" y="19" width="24" height="10" rx="3" fill="#fdb813"/><text x="19" y="27" text-anchor="middle" class="pre">PRE</text></svg></button>
        </div>
    </footer>
</body>
</html>
```
FILE: styles.css
```css
* {
    box-sizing: border-box;
}

body {
    margin: 0;
    min-height: 100vh;
    display: flex;
    flex-direction: column;
    font-family: 'Open Sans', 'Noto Sans', sans-serif;
    font-size: 13px;
    color: #222;
    background-color: #f7f7f7;
    overflow: hidden;
}

button {
    font: inherit;
    color: inherit;
    background: none;
    border: 0;
    padding: 0;
    display: flex;
    align-items: center;
    justify-content: center;
}

input {
    font: inherit;
    background: none;
    border: 0;
    padding: 0;
    min-width: 0;
    flex: 1;
    outline: none;
}

svg {
    display: block;
    flex: none;
}

/* title bar */
.titlebar {
    display: flex;
    height: 33px;
    border-bottom: 1px solid #777;
}

.logo {
    position: relative;
    display: flex;
    align-items: center;
    gap: 4px;
    width: 145px;
    height: 37px;
    margin-left: 10px;
    padding-left: 6px;
    border: 1px solid #999;
    border-top: 0;
    background: linear-gradient(#fff, #e4e4e4);
}

.logo-text {
    font-family: Lato, sans-serif;
    font-style: italic;
    font-size: 16px;
    color: #c8352f;
}

.logo-text b {
    font-weight: 900;
}

.logo-more {
    width: 22px;
    border-right: 1px solid #888;
}

.quick {
    display: flex;
    align-items: center;
    margin-left: 28px;
}

.q {
    width: 26px;
    height: 26px;
}

.arrow {
    width: 13px;
    height: 26px;
}

.arrow::before,
.caret::before {
    content: "";
    border: 3px solid transparent;
    border-top: 4px solid #333;
    border-bottom: 0;
}

.arrow.pale::before {
    border-top-color: #999;
}

.caret {
    display: flex;
}

.caret.up::before {
    border-top: 0;
    border-bottom: 4px solid #333;
}

.caret.big::before {
    border-width: 5px 4px 0;
}

.select {
    border: 1px solid #666;
    background-color: #b4b4b4;
}

.select-arrow {
    border: 1px solid #777;
    border-left: 0;
}

.doc-title {
    flex: 1;
    text-align: center;
    line-height: 34px;
}

.help-search {
    display: flex;
    align-items: center;
    gap: 6px;
    width: 252px;
    height: 28px;
    margin-top: 3px;
    padding: 0 4px 0 5px;
    border: 1px solid #111;
    background-color: #ededf1;
}

.help-search input::placeholder {
    color: #666;
}

.qmark {
    font-size: 14px;
    font-weight: bold;
    fill: #2f6d93;
}

.win {
    display: flex;
    align-items: center;
    padding-left: 4px;
}

.win button {
    width: 25px;
    height: 28px;
}

.win .arrow {
    width: 14px;
}

.win .help {
    font-size: 18px;
    font-weight: bold;
}

/* command manager */
.ribbon {
    display: flex;
    height: 85px;
    padding: 6px 0 1px;
}

.group {
    display: flex;
    border-right: 1px solid #ccc;
}

.g1 {
    width: 312px;
    padding-left: 6px;
}

.g2 {
    width: 339px;
}

.g3 {
    width: 297px;
}

.g4 {
    width: 127px;
    border: 0;
}

.big,
.instant {
    flex-direction: column;
    justify-content: flex-start;
    padding-top: 5px;
    line-height: 19px;
    white-space: nowrap;
}

.big svg,
.instant svg {
    margin-bottom: 1px;
    height: 20px;
}

.big.mid {
    padding-top: 12px;
}

.instant {
    width: 71px;
    padding-top: 11px;
    border: 1px solid #666;
    background-color: #b0b0b0;
}

.big .caret {
    margin-top: 20px;
}

.w40 { width: 40px; }
.w52 { width: 52px; }
.w66 { width: 66px; }
.w70 { width: 70px; }
.w72 { width: 72px; }
.w82 { width: 82px; }
.w94 { width: 94px; }

.stack {
    display: flex;
    flex-direction: column;
    padding-left: 2px;
}

.g3 .stack {
    padding-left: 3px;
}

.small {
    height: 26px;
    gap: 6px;
    justify-content: flex-start;
    white-space: nowrap;
}

/* graphics area */
.viewport {
    position: relative;
    flex: 1;
    overflow: hidden;
    background:
        linear-gradient(to bottom, transparent 54%, rgba(255, 255, 255, .75) 63%, #fff 72%, #fefefe 84%, #f6f7fa 100%),
        radial-gradient(ellipse 30% 58% at 82% 42%, rgba(217, 220, 231, .9), rgba(225, 228, 237, .6) 60%, transparent 100%),
        radial-gradient(ellipse 30% 50% at 82% 0%, rgba(224, 228, 236, .9), rgba(226, 230, 238, .6) 45%, transparent 100%),
        linear-gradient(173deg, #fff 27%, #f4f5f9 34%, #e4e7ef 40%, #dfe3ec 45%);
}

.headsup {
    position: absolute;
    left: 916px;
    top: 32px;
    display: flex;
}

.headsup button {
    width: 26px;
    height: 26px;
}

.headsup .arrow {
    width: 14px;
}

.headsup .on {
    border: 1px solid #444;
    background-color: #9c9c9c;
}

.doc-controls {
    position: absolute;
    right: 3px;
    top: 8px;
    display: flex;
}

.doc-controls button {
    width: 26px;
    height: 18px;
}

.part {
    position: absolute;
    left: 50%;
    top: 162px;
}

.shadow {
    fill: #3b3b3b;
}

.edge {
    stroke: #14151f;
    stroke-width: 1;
    stroke-linejoin: round;
}

.seam {
    fill: none;
    stroke: #14151f;
    stroke-width: 2;
}

.watermark {
    position: absolute;
    left: 0;
    right: 0;
    top: 366px;
    display: flex;
    justify-content: center;
    align-items: baseline;
    font-family: 'Liberation Mono', 'Noto Sans CJK SC', monospace;
    font-size: 60px;
    line-height: 88px;
    color: rgba(255, 255, 255, .7);
}

.watermark span {
    font-family: 'Noto Sans CJK SC', sans-serif;
    font-size: 70px;
    font-weight: 300;
}

.triad {
    position: absolute;
    left: 283px;
    bottom: 0;
}

.triad svg {
    margin-left: 3px;
}

.triad text {
    font-size: 13px;
    text-anchor: middle;
}

.view-name {
    margin-top: 16px;
    font-family: 'DejaVu Sans', sans-serif;
    font-size: 18px;
    line-height: 22px;
    color: #111;
}

/* document tabs */
.tabs {
    display: flex;
    height: 21px;
    padding-left: 2px;
    border-top: 1px solid #888;
    border-bottom: 1px solid #888;
    font-size: 15px;
    line-height: 18px;
}

.step {
    width: 20px;
    border: 1px solid #9292a8;
    background-color: #b4b4c8;
}

.tab {
    width: 89px;
    padding-bottom: 1px;
    border-right: 1px solid #888;
    background-color: #d3d3d3;
}

.tab.active {
    width: 77px;
    background-color: #fafafa;
    font-weight: bold;
}

.tab.wide {
    width: 144px;
    padding-right: 10px;
}

/* status bar */
.status {
    display: flex;
    align-items: center;
    height: 21px;
    padding-left: 1px;
    font-size: 14px;
    line-height: 22px;
}

.product {
    flex: 1;
}

.cell {
    height: 20px;
    border-left: 1px solid #ccc;
}

.narrow {
    width: 8px;
}

.editing {
    width: 87px;
    padding-left: 3px;
    white-space: nowrap;
}

.gap {
    width: 16px;
}

.units {
    width: 180px;
    justify-content: flex-start;
    padding-left: 38px;
    gap: 25px;
}

/* windows taskbar */
.taskbar {
    display: flex;
    align-items: center;
    height: 56px;
    padding-top: 4px;
    color: #fff;
    font-size: 14px;
    line-height: 20px;
    background: linear-gradient(to right, #22212a, #2b1e1c 8%, #35201a 10%, #2d2518 16%, #2e2019 20%, #2f2018 50%, #221f20 62%, #202024 100%);
}

.weather {
    width: 440px;
    justify-content: flex-start;
    gap: 4px;
    padding-left: 24px;
    text-align: left;
}

.weather svg {
    margin-bottom: 6px;
}

.weather text {
    font-size: 13px;
}

.weather-text {
    color: #c9c4c2;
}

.weather-text b {
    display: block;
    font-weight: normal;
    color: #fff;
}

.app {
    position: relative;
    width: 55px;
    height: 50px;
}

.run::after {
    content: "";
    position: absolute;
    left: 50%;
    bottom: 1px;
    width: 8px;
    height: 4px;
    margin-left: -4px;
    border-radius: 2px;
    background-color: #9b9795;
}

.current {
    background-color: #302d2e;
    border-radius: 5px;
}

.current::after {
    width: 20px;
    margin-left: -10px;
    background-color: #5fb4ea;
}

.search {
    display: flex;
    align-items: center;
    gap: 11px;
    width: 275px;
    height: 40px;
    margin-left: 4px;
    padding: 0 5px 0 14px;
    border: 1px solid #62554e;
    border-radius: 20px;
    background-color: #4a3d36;
    font-size: 16px;
}

.search input::placeholder {
    color: #d6d1ce;
}

.apps {
    display: flex;
    margin-left: 2px;
}

.icon-t {
    font-size: 11px;
    font-weight: bold;
    fill: #fff;
}

.icon-s,
.icon-w {
    font-size: 14px;
    font-weight: bold;
    fill: #fff;
}

.icon-w {
    font-size: 12px;
}

.icon-y {
    font-size: 8px;
    font-weight: bold;
    fill: #fff;
}

.tray {
    display: flex;
    align-items: center;
    margin-left: auto;
    padding-right: 19px;
}

.t-chev,
.t-40 {
    width: 40px;
}

.lang {
    width: 56px;
}

.net {
    gap: 9px;
    margin-left: 7px;
}

.clock {
    width: 99px;
    justify-content: flex-end;
    text-align: right;
}

.bell {
    width: 40px;
}

.copilot {
    width: 32px;
    margin-left: 11px;
}

.pre {
    font-size: 8px;
    font-weight: bold;
    fill: #222;
}
```
